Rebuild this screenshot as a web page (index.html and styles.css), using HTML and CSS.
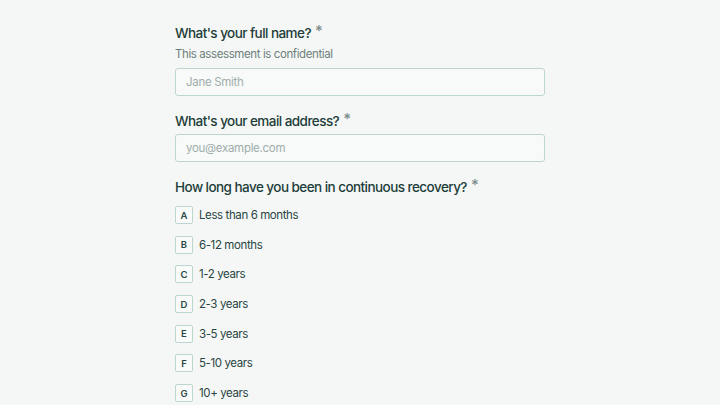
FILE: index.html
```html
<html>
	<head>
		<title>Recovery Assessment</title>
		<link rel="stylesheet" href="styles.css">
	</head>
	<body>
		<div id="form">
			<div class="question">
				<div class="label">What's your full name? <span class="req">*</span></div>
				<div class="hint">This assessment is confidential</div>
				<input class="field" type="text" placeholder="Jane Smith">
			</div>

			<div class="question">
				<div class="label">What's your email address? <span class="req">*</span></div>
				<input class="field" type="email" placeholder="you@example.com">
			</div>

			<div class="question">
				<div class="label">How long have you been in continuous recovery? <span class="req">*</span></div>
				<div class="choices">
					<div class="choice"><span class="key">A</span>Less than 6 months</div>
					<div class="choice"><span class="key">B</span>6-12 months</div>
					<div class="choice"><span class="key">C</span>1-2 years</div>
					<div class="choice"><span class="key">D</span>2-3 years</div>
					<div class="choice"><span class="key">E</span>3-5 years</div>
					<div class="choice"><span class="key">F</span>5-10 years</div>
					<div class="choice"><span class="key">G</span>10+ years</div>
				</div>
			</div>
		</div>
	</body>
</html>
```
FILE: styles.css
```css
body {
	margin: 0px;
	padding: 0px;
	background: #f4f7f6;
	font-family: Inter, 'Noto Sans', sans-serif;
	color: #1f3b38;
}

#form {
	width: 370px;
	margin-left: auto;
	margin-right: auto;
	padding-top: 22px;
}

.question {
	margin-bottom: 14px;
}

.label {
	font-size: 13.5px;
	font-weight: 500;
	letter-spacing: -0.55px;
	line-height: 22px;
	color: #1d3d39;
}

.label .req {
	color: #7d8f8c;
	font-size: 15px;
	position: relative;
	top: -2px;
	margin-left: 1px;
}

.hint {
	font-size: 11.5px;
	letter-spacing: -0.4px;
	color: #6f7f7c;
	line-height: 20px;
	margin-bottom: 4px;
}

.field {
	display: block;
	box-sizing: border-box;
	width: 100%;
	height: 28px;
	margin-top: 2px;
	padding: 0px 10px;
	border: 1px solid #bcd6ce;
	border-radius: 3px;
	background: #f7faf9;
	font-family: Inter, 'Noto Sans', sans-serif;
	font-size: 11.5px;
	letter-spacing: -0.3px;
	color: #1f3b38;
}

.field::placeholder {
	color: #a0adab;
}

.field:focus { outline: 0; }

.choices {
	margin-top: 8px;
}

.choice {
	display: flex;
	align-items: center;
	height: 18px;
	margin-bottom: 11.7px;
	font-size: 11.5px;
	letter-spacing: -0.4px;
	color: #2a4542;
}

.choice .key {
	display: flex;
	align-items: center;
	justify-content: center;
	box-sizing: border-box;
	width: 18px;
	height: 18px;
	margin-right: 6px;
	border: 1px solid #bcd6ce;
	border-radius: 2px;
	background: #f8fbfa;
	font-size: 9.5px;
	font-weight: 600;
	letter-spacing: 0px;
	color: #2a4542;
}
```
